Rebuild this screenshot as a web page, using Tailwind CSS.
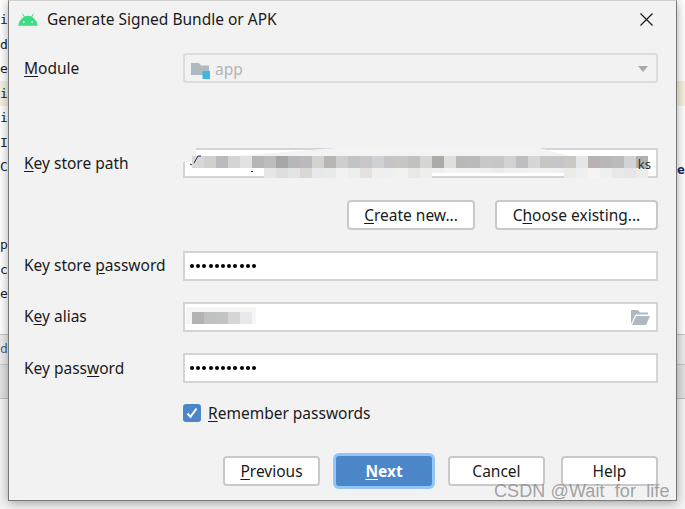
<!DOCTYPE html>
<html lang="en">
<head>
  <meta charset="UTF-8" />
  <meta name="viewport" content="width=device-width, initial-scale=1.0" />
  <title>Generate Signed Bundle or APK</title>
  <script src="https://cdn.jsdelivr.net/npm/@tailwindcss/browser@4"></script>
</head>
<body class="bg-white font-['Noto_Sans',sans-serif] text-[15.5px] text-[#1a1a1a]">
  <div class="relative w-[685px] h-[509px] overflow-hidden bg-[#f4f4f4]">

    <!-- editor behind the dialog -->
    <div class="absolute left-0 top-0 w-[685px] h-[509px] font-['DejaVu_Sans_Mono',monospace] text-[13px] leading-[24.5px] text-[#222]">
      <div class="absolute left-0 top-0 w-full h-[334px] bg-white"></div>
      <div class="absolute left-0 top-[81px] w-full h-[25px] bg-[#f5f1de]"></div>
      <div class="absolute left-0 top-[334px] w-full h-[31px] bg-[#ececec] border-t border-b border-[#c8c8c8]"></div>
      <div class="absolute left-0 top-[365px] w-full h-[34px] bg-[#e2e2e2] border-b border-[#c0c0c0]"></div>
      <div class="absolute left-0 top-[8px] w-[8px] overflow-hidden">
        <div>i</div><div>d</div><div>e</div><div>i</div><div>i</div><div>I</div><div>C</div>
      </div>
      <div class="absolute left-0 top-[233px] w-[8px] overflow-hidden">
        <div>p</div><div>c</div><div>e</div>
      </div>
      <div class="absolute left-0 top-[337px] w-[8px] overflow-hidden text-[#4a6a90]">d</div>
      <div class="absolute left-[677px] top-[158px] font-bold text-[#1a2a6c]">e</div>
    </div>

    <!-- dialog window -->
    <div class="absolute left-[8px] top-0 w-[669px] h-[501px] bg-[#f2f2f2] border border-[#777] border-t-[#d0d0d0] shadow-[0_2px_10px_rgba(0,0,0,0.35)] flex flex-col">

      <div class="h-[37px] flex items-center pl-[9px] pr-[23px]">
        <svg class="w-[20px] h-[13px] mr-[9px]" viewBox="0 0 21 13" fill="#3ddc84">
          <path d="M0.3 13C0.9 8.6 3.2 5.4 6.2 3.8L4.3 0.7L5 0.3L7 3.4C9.4 2.4 11.6 2.4 14 3.4L16 0.3L16.7 0.7L14.8 3.8C17.8 5.4 20.1 8.6 20.7 13Z" />
          <circle cx="6" cy="9" r="1" fill="#f2f2f2" />
          <circle cx="15" cy="9" r="1" fill="#f2f2f2" />
        </svg>
        <span class="flex-1">Generate Signed Bundle or APK</span>
        <svg class="w-[13px] h-[13px]" viewBox="0 0 13 13" stroke="#1a1a1a" stroke-width="1.2" fill="none">
          <path d="M0.5 0.5L12.5 12.5M12.5 0.5L0.5 12.5" />
        </svg>
      </div>

      <div class="pl-[15px] pr-[18px]">
        <!-- module -->
        <div class="mt-[15px] flex items-center h-[30px]">
          <label class="w-[159px] pt-[2px]"><span class="underline underline-offset-2">M</span>odule</label>
          <div class="flex-1 h-full flex items-center border-2 border-[#dcdcdc] rounded-[3px] pt-[4px] pl-[6px] pr-[8px]">
            <svg class="w-[19px] h-[17px] mr-[5px]" viewBox="0 0 19 17">
              <path d="M0 1H8L10 3.5H18V13H0Z" fill="#afb9c0" />
              <rect x="11.5" y="9" width="7.5" height="8" fill="#40b6e0" />
            </svg>
            <span class="text-[#b4b4b4] flex-1">app</span>
            <span class="w-0 h-0 mb-[2px] border-l-[5.5px] border-r-[5.5px] border-t-[6px] border-l-transparent border-r-transparent border-t-[#a8a8a8]"></span>
          </div>
        </div>

        <!-- key store path -->
        <div class="mt-[65px] flex items-center h-[30px]">
          <label class="w-[159px] pt-[2px]"><span class="underline underline-offset-2">K</span>ey store path</label>
          <div class="relative flex-1 h-full bg-white border-2 border-[#d4d4d4]">
            <!-- blurred-out path -->
            <div class="absolute left-[-2px] top-[-2px] w-[13px] h-[14px] bg-[#f2f2f2]"></div>
            <div class="absolute left-[50px] top-[-2px] w-[335px] h-[8px] bg-[#f3f3f3] [clip-path:polygon(30%_0,91%_0,100%_100%,0_100%)]"></div>
            <div class="absolute left-[7px] top-[6px] flex h-[12px]">
              <i class="w-[12px] bg-[#d8d8d6]"></i><i class="w-[12px] bg-[#d0d0ce]"></i><i class="w-[12px] bg-[#b8bcbe]"></i><i class="w-[12px] bg-[#d4d4d2]"></i><i class="w-[12px] bg-[#e2e2e2]"></i><i class="w-[12px] bg-[#b8b6b4]"></i><i class="w-[12px] bg-[#bcbebe]"></i><i class="w-[12px] bg-[#a8a6a4]"></i><i class="w-[12px] bg-[#b4b8bc]"></i><i class="w-[12px] bg-[#bcb8be]"></i><i class="w-[12px] bg-[#d2d2d0]"></i><i class="w-[12px] bg-[#b8b6b2]"></i><i class="w-[12px] bg-[#d0cecc]"></i><i class="w-[12px] bg-[#c0c4c6]"></i><i class="w-[12px] bg-[#c8c6c8]"></i><i class="w-[12px] bg-[#ced2d4]"></i><i class="w-[12px] bg-[#c6c4c4]"></i><i class="w-[12px] bg-[#c8c6c4]"></i><i class="w-[12px] bg-[#c0c2c0]"></i><i class="w-[12px] bg-[#d6d6d6]"></i><i class="w-[12px] bg-[#aaaca8]"></i><i class="w-[12px] bg-[#e0dfdc]"></i><i class="w-[12px] bg-[#b8bab8]"></i><i class="w-[12px] bg-[#bababa]"></i><i class="w-[12px] bg-[#c8c6c6]"></i><i class="w-[12px] bg-[#c6c6c4]"></i><i class="w-[12px] bg-[#d4d2d0]"></i><i class="w-[12px] bg-[#bcbec2]"></i><i class="w-[12px] bg-[#d6d6d6]"></i><i class="w-[12px] bg-[#c8c6c2]"></i><i class="w-[12px] bg-[#c4c6ca]"></i><i class="w-[12px] bg-[#ccc8c4]"></i><i class="w-[12px] bg-[#e4e6ea]"></i><i class="w-[12px] bg-[#b8b3b0]"></i><i class="w-[12px] bg-[#b8b8b8]"></i><i class="w-[12px] bg-[#bcbaba]"></i><i class="w-[12px] bg-[#d0d4d6]"></i><i class="w-[12px] bg-[#b4b0ac]"></i>
            </div>
            <div class="absolute left-[79px] top-[18px] flex items-start">
              <i class="w-[12px] h-[10px] bg-[#e6e6e4]"></i><i class="w-[12px] h-[10px] bg-[#dedede]"></i><i class="w-[12px] h-[10px] bg-[#e4e4e4]"></i><i class="w-[12px] h-[10px] bg-[#d8d8d6]"></i><i class="w-[12px] h-[10px] bg-[#e8e8e8]"></i><i class="w-[12px] h-[10px] bg-[#e8eaea]"></i><i class="w-[12px] h-[10px] bg-[#f2f2f2]"></i><i class="w-[12px] h-[10px] bg-[#eeeeee]"></i><i class="w-[12px] h-[10px] bg-[#e2e2e0]"></i><i class="w-[12px] h-[10px] bg-[#f0efec]"></i><i class="w-[12px] h-[10px] bg-[#eef0f2]"></i><i class="w-[12px] h-[10px] bg-[#f2f2ee]"></i><i class="w-[12px] h-[10px] bg-[#e8e8e6]"></i><i class="w-[12px] h-[10px] bg-[#eeeeec]"></i>
              <i class="w-[12px] h-[5px] bg-[#f0f0f0]"></i><i class="w-[12px] h-[5px] bg-[#f4f4f4]"></i><i class="w-[12px] h-[5px] bg-[#f2f2f2]"></i><i class="w-[12px] h-[5px] bg-[#f2f2f2]"></i><i class="w-[12px] h-[5px] bg-[#efefef]"></i><i class="w-[12px] h-[5px] bg-[#ececec]"></i><i class="w-[12px] h-[5px] bg-[#efefef]"></i><i class="w-[12px] h-[5px] bg-[#f0f0f0]"></i><i class="w-[12px] h-[5px] bg-[#f2f2f2]"></i><i class="w-[12px] h-[5px] bg-[#f2f2f2]"></i><i class="w-[12px] h-[5px] bg-[#f0f0f0]"></i>
              <i class="w-[12px] h-[10px] bg-[#ebebe9]"></i><i class="w-[12px] h-[10px] bg-[#f0f0f0]"></i><i class="w-[12px] h-[10px] bg-[#f4f4f4]"></i><i class="w-[12px] h-[10px] bg-[#f0f0f0]"></i><i class="w-[12px] h-[10px] bg-[#e8e8e8]"></i><i class="w-[12px] h-[10px] bg-[#e6e6e6]"></i><i class="w-[12px] h-[10px] bg-[#ececec]"></i>
            </div>
            <svg class="absolute left-[4px] top-[4px] w-[12px] h-[12px]" viewBox="0 0 12 12" fill="none" stroke="#1a2a5c" stroke-width="1">
              <path d="M3 11L1 10M5 9L9 2H12" />
            </svg>
            <i class="absolute left-[66px] top-[21px] w-[2px] h-[1px] bg-[#1a2a5c]"></i>
            <span class="absolute right-[5px] top-[6px] text-[13px] leading-[16px] text-[#333]">ks</span>
          </div>
        </div>

        <!-- create / choose -->
        <div class="mt-[22px] flex justify-end gap-[20px] h-[30px]">
          <button class="w-[128px] pt-[2px] bg-white border-2 border-[#c9c9c9] rounded-[4px]"><span class="underline underline-offset-2">C</span>reate new...</button>
          <button class="w-[163px] pt-[2px] bg-white border-2 border-[#c9c9c9] rounded-[4px]">C<span class="underline underline-offset-2">h</span>oose existing...</button>
        </div>

        <!-- key store password -->
        <div class="mt-[21px] flex items-center h-[30px]">
          <label class="w-[159px]">Key store <span class="underline underline-offset-2">p</span>assword</label>
          <div class="flex-1 h-full bg-white border-2 border-[#d4d4d4] flex items-center pl-[5px] gap-[2.2px]">
            <i class="w-[4px] h-[4px] rounded-full bg-black"></i><i class="w-[4px] h-[4px] rounded-full bg-black"></i><i class="w-[4px] h-[4px] rounded-full bg-black"></i><i class="w-[4px] h-[4px] rounded-full bg-black"></i><i class="w-[4px] h-[4px] rounded-full bg-black"></i><i class="w-[4px] h-[4px] rounded-full bg-black"></i><i class="w-[4px] h-[4px] rounded-full bg-black"></i><i class="w-[4px] h-[4px] rounded-full bg-black"></i><i class="w-[4px] h-[4px] rounded-full bg-black"></i><i class="w-[4px] h-[4px] rounded-full bg-black"></i><i class="w-[4px] h-[4px] rounded-full bg-black"></i>
          </div>
        </div>

        <!-- key alias -->
        <div class="mt-[21px] flex items-center h-[30px]">
          <label class="w-[159px]">K<span class="underline underline-offset-2">e</span>y alias</label>
          <div class="relative flex-1 h-full bg-white border-2 border-[#d4d4d4] flex items-center justify-end pr-[6px]">
            <div class="absolute left-[1px] top-[3px] w-[70px] h-[17px] bg-[#f5f5f4]"></div>
            <div class="absolute left-[7px] top-[8px] flex h-[12px]">
              <i class="w-[12px] bg-[#b4b2b4]"></i><i class="w-[12px] bg-[#c0c2c2]"></i><i class="w-[12px] bg-[#c0c4c4]"></i><i class="w-[12px] bg-[#d6d6d4]"></i><i class="w-[12px] bg-[#e8e8ec]"></i>
            </div>
            <svg class="w-[19px] h-[15px]" viewBox="0 0 19 15" fill="#afb9c0">
              <path d="M0 0H7L9 2.5H17V4.5H4.5L0 14Z" />
              <path d="M5 6H19L15 15H1Z" />
            </svg>
          </div>
        </div>

        <!-- key password -->
        <div class="mt-[21px] flex items-center h-[30px]">
          <label class="w-[159px] pt-[2px]">Key pass<span class="underline underline-offset-2">w</span>ord</label>
          <div class="flex-1 h-full bg-white border-2 border-[#d4d4d4] flex items-center pl-[5px] gap-[2.2px]">
            <i class="w-[4px] h-[4px] rounded-full bg-black"></i><i class="w-[4px] h-[4px] rounded-full bg-black"></i><i class="w-[4px] h-[4px] rounded-full bg-black"></i><i class="w-[4px] h-[4px] rounded-full bg-black"></i><i class="w-[4px] h-[4px] rounded-full bg-black"></i><i class="w-[4px] h-[4px] rounded-full bg-black"></i><i class="w-[4px] h-[4px] rounded-full bg-black"></i><i class="w-[4px] h-[4px] rounded-full bg-black"></i><i class="w-[4px] h-[4px] rounded-full bg-black"></i><i class="w-[4px] h-[4px] rounded-full bg-black"></i><i class="w-[4px] h-[4px] rounded-full bg-black"></i>
          </div>
        </div>

        <!-- remember -->
        <div class="mt-[20px] ml-[159px] flex items-center h-[19px]">
          <span class="w-[18px] h-[18px] rounded-[3px] bg-[#4a86c8] flex items-center justify-center mr-[7px]">
            <svg class="w-[12px] h-[12px]" viewBox="0 0 12 12" fill="none" stroke="white" stroke-width="2">
              <path d="M1.5 6.5L4.5 9.8L10.5 1.5" />
            </svg>
          </span>
          <span class="pt-[2px]"><span class="underline underline-offset-2">R</span>emember passwords</span>
        </div>

        <!-- footer -->
        <div class="mt-[34px] flex justify-end gap-[16px] h-[30px]">
          <button class="w-[97px] pt-[2px] bg-white border-2 border-[#c9c9c9] rounded-[4px]"><span class="underline underline-offset-2">P</span>revious</button>
          <button class="w-[96px] pt-[2px] bg-[#4a86c8] text-white font-bold rounded-[3px] shadow-[0_0_0_3px_#93c5f7]"><span class="underline underline-offset-2">N</span>ext</button>
          <button class="w-[97px] pt-[2px] bg-white border-2 border-[#c9c9c9] rounded-[4px]">Cancel</button>
          <button class="w-[97px] pt-[2px] bg-white border-2 border-[#c9c9c9] rounded-[4px]">Help</button>
        </div>
      </div>
    </div>

    <!-- watermark -->
    <span class="absolute left-[494px] top-[480px] font-['Liberation_Sans',sans-serif] text-[18px] leading-[22px] tracking-[0.1px] text-[#8c8c8c]/80">CSDN @Wait_for_life</span>
  </div>
</body>
</html>
